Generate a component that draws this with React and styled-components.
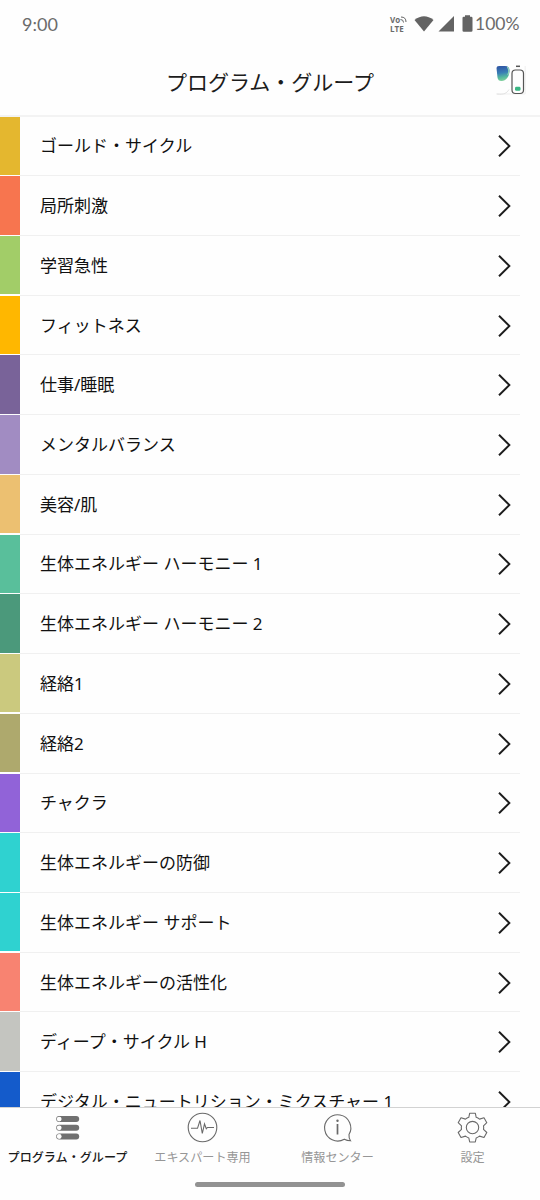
import React, { useState } from "react";
import styled, { createGlobalStyle } from "styled-components";

const GlobalStyle = createGlobalStyle`
  * {
    box-sizing: border-box;
  }

  body {
    margin: 0;
    background-color: #fefefe;
    font-family: "Noto Sans", "Noto Sans CJK JP", sans-serif;
  }
`;

const Screen = styled.div`
  display: flex;
  flex-direction: column;
  width: 540px;
  height: 1200px;
  overflow: hidden;
  background-color: #fefefe;
`;

const StatusBar = styled.div`
  display: flex;
  align-items: center;
  justify-content: space-between;
  flex-shrink: 0;
  height: 48px;
  padding: 0 22px 0 22px;
  color: #6b6b6b;
  font-family: Lato, sans-serif;
  font-size: 18px;
  line-height: 20px;
`;

const Clock = styled.span`
  padding-bottom: 1px;
`;

const StatusIcons = styled.div`
  display: flex;
  align-items: center;

  svg {
    display: block;
  }
`;

const VolteIcon = styled.div`
  display: flex;
  flex-direction: column;
  width: 18px;
  margin-right: 6px;
  font-family: "Open Sans", sans-serif;
  font-size: 8px;
  font-weight: 700;
  line-height: 9px;
`;

const VolteTop = styled.div`
  display: flex;
  align-items: center;
  height: 9px;
`;

const Battery = styled.span`
  width: 43px;
  margin-left: 2px;
  font-size: 17.5px;
  white-space: nowrap;
`;

const Header = styled.header`
  display: grid;
  grid-template-columns: 64px 1fr 64px;
  align-items: center;
  flex-shrink: 0;
  height: 68.6px;
  border-bottom: 2px solid #f3f3f3;
`;

const Title = styled.h1`
  grid-column: 2;
  margin: 0;
  padding-top: 2px;
  color: #1c1c1c;
  font-size: 21px;
  font-weight: 400;
  line-height: 30px;
  text-align: center;
`;

const DeviceStatus = styled.div`
  display: flex;
  justify-content: flex-end;
  padding: 0 14px 2px 0;
`;

const List = styled.ul`
  flex: 1;
  min-height: 0;
  margin: 0;
  padding: 0;
  overflow: hidden;
  list-style: none;
`;

const Row = styled.li`
  display: flex;
  height: 59.73px;
  cursor: pointer;
`;

const Swatch = styled.div`
  width: 20px;
  height: 58.4px;
  background-color: ${({ $color }) => $color};
`;

const RowBody = styled.div`
  display: flex;
  align-items: center;
  justify-content: space-between;
  width: 500px;
  padding: 1px 8px 0 20px;
  border-bottom: 1px solid #f0f0f0;
`;

const RowLabel = styled.span`
  color: #111;
  font-size: 17px;
  line-height: 26px;
  white-space: nowrap;
`;

const TabBar = styled.nav`
  display: grid;
  grid-template-columns: repeat(4, 1fr);
  flex-shrink: 0;
  height: 73px;
  border-top: 1px solid #d2d2d2;
`;

const Tab = styled.button`
  display: flex;
  flex-direction: column;
  align-items: center;
  padding: 4px 0 0;
  border: none;
  background: none;
  color: ${({ $active }) => ($active ? "#1a1a1a" : "#969696")};
  font-family: inherit;
  font-size: 12.1px;
  font-weight: ${({ $active }) => ($active ? 500 : 400)};
  line-height: 18px;
  white-space: nowrap;
  cursor: pointer;

  svg {
    flex-shrink: 0;
    margin-bottom: 5px;
  }
`;

const GestureArea = styled.div`
  display: flex;
  justify-content: center;
  flex-shrink: 0;
  height: 20px;
  padding-top: 2px;
`;

const GestureHandle = styled.div`
  width: 150px;
  height: 5px;
  border-radius: 3px;
  background-color: #929292;
`;

const groups = [
  { name: "ゴールド・サイクル", color: "#e4b72f" },
  { name: "局所刺激", color: "#f7754f" },
  { name: "学習急性", color: "#a2cd68" },
  { name: "フィットネス", color: "#ffb700" },
  { name: "仕事/睡眠", color: "#796399" },
  { name: "メンタルバランス", color: "#a18cc2" },
  { name: "美容/肌", color: "#ecc071" },
  { name: "生体エネルギー ハーモニー 1", color: "#59bf9b" },
  { name: "生体エネルギー ハーモニー 2", color: "#4b997b" },
  { name: "経絡1", color: "#cbc97e" },
  { name: "経絡2", color: "#aea96d" },
  { name: "チャクラ", color: "#9163d8" },
  { name: "生体エネルギーの防御", color: "#2fd2d0" },
  { name: "生体エネルギー サポート", color: "#2fd2d0" },
  { name: "生体エネルギーの活性化", color: "#f88371" },
  { name: "ディープ・サイクル H", color: "#c4c5c0" },
  { name: "デジタル・ニュートリション・ミクスチャー 1", color: "#145bcb" },
];

const ChevronIcon = () => (
  <svg width="16" height="26" viewBox="0 0 16 26" fill="none">
    <path d="M3 2.800L13.400 13L3 23.200" stroke="#1c1c1c" strokeWidth="1.9" />
  </svg>
);

const WifiIcon = () => (
  <svg width="20" height="18" viewBox="0 0 20 18">
    <path d="M.5 5Q10-2.5 19.5 5L10 16.5Z" fill="#636363" />
  </svg>
);

const SignalIcon = () => (
  <svg width="17" height="18" viewBox="0 0 17 18" style={{ marginLeft: 4 }}>
    <path d="M16 1V16.5H0.5Z" fill="#636363" />
  </svg>
);

const BatteryIcon = () => (
  <svg width="11" height="18" viewBox="0 0 11 18" style={{ marginLeft: 7 }}>
    <path
      d="M3 .2h5v1.5h1.2q1.3 0 1.3 1.3v12.400q0 1.3-1.3 1.3H1.8Q.5 16.700 .5 15.400V3Q.5 1.700 1.800 1.700H3Z"
      fill="#636363"
    />
  </svg>
);

const DeviceIcon = () => (
  <svg width="31" height="32" viewBox="0 0 31 32" fill="none">
    <defs>
      <linearGradient id="patch" x1="0" y1="0" x2="0.15" y2="1">
        <stop offset="0.1" stopColor="#315aa6" />
        <stop offset="0.5" stopColor="#397fb5" />
        <stop offset="0.8" stopColor="#55b99e" />
        <stop offset="1" stopColor="#79cd9b" />
      </linearGradient>
    </defs>
    <path d="M30.200 2V30H1" stroke="#efefef" strokeWidth="1" />
    <path d="M2 30C9 31 12 29 14 25.500" stroke="#e2e2e2" />
    <path
      d="M1.500 4Q1.500 2 4 2H10Q14.500 2 14.500 6.500C14.500 12.500 11 17 6.500 17Q3 17 2.500 13.500Z"
      fill="url(#patch)"
    />
    <path d="M12.300 2.800Q15 6 12.800 11" stroke="#91d6b8" strokeWidth="1.200" />
    <rect x="17" y="6" width="11.500" height="23.500" rx="3.500" stroke="#555" strokeWidth="1.200" />
    <path d="M21 2.300H25" stroke="#555" strokeWidth="1.500" />
    <rect x="20" y="22.800" width="5.500" height="4" rx="1.400" fill="#3ab684" />
  </svg>
);

const GroupsIcon = () => (
  <svg width="32" height="32" viewBox="0 0 32 32">
    {[5.4, 14.1, 22.8].map((y) => (
      <g key={y}>
        <rect x="4.200" y={y - 1.300} width="23" height="6" rx="3" fill="#707070" />
        <circle cx="7.200" cy={y + 1.700} r="2.400" fill="#fefefe" />
      </g>
    ))}
  </svg>
);

const ExpertIcon = () => (
  <svg width="32" height="32" viewBox="0 0 32 32" fill="none" stroke="#696969" strokeWidth="1.100">
    <circle cx="15.500" cy="15.500" r="14.300" />
    <path d="M4 16.300H10.500L13 8.500L15.300 21.500L17.500 12L19.300 16.800L20.500 15.500H27" />
  </svg>
);

const InfoIcon = () => (
  <svg width="32" height="32" viewBox="0 0 32 32" fill="none" stroke="#696969" strokeWidth="1.100">
    <path d="M28.500 28.800C26 28.700 24.200 28.200 22.300 27.200A13.100 13.100 0 1 1 27 22.500C26.800 25 27.300 27 28.500 28.800Z" />
    <path d="M15.500 12V22.500" strokeWidth="1.700" />
    <circle cx="15.500" cy="8.700" r="1.200" fill="#696969" stroke="none" />
  </svg>
);

const SettingsIcon = () => (
  <svg
    width="32"
    height="32"
    viewBox="0 0 32 32"
    fill="none"
    stroke="#696969"
    strokeWidth="1.100"
    strokeLinejoin="round"
  >
    <path d="M12.700 1.200H18.300L19.200 5.300Q21 5.900 22.500 7.100L27 5.700L29.800 10.700L26.500 13.800Q26.900 15.600 26.500 17.400L29.800 20.500L27 25.500L22.500 24.100Q21 25.300 19.200 25.900L18.300 30H12.700L11.800 25.900Q10 25.300 8.500 24.100L4 25.500L1.200 20.500L4.500 17.400Q4.100 15.600 4.500 13.800L1.200 10.700L4 5.700L8.500 7.100Q10 5.900 11.800 5.300Z" />
    <circle cx="15.500" cy="15.600" r="6.200" />
  </svg>
);

const tabs = [
  { id: "groups", label: "プログラム・グループ", Icon: GroupsIcon },
  { id: "expert", label: "エキスパート専用", Icon: ExpertIcon },
  { id: "info", label: "情報センター", Icon: InfoIcon },
  { id: "settings", label: "設定", Icon: SettingsIcon },
];

export default function App() {
  const [activeTab, setActiveTab] = useState("groups");

  return (
    <>
      <GlobalStyle />
      <Screen>
        <StatusBar>
          <Clock>9:00</Clock>
          <StatusIcons>
            <VolteIcon>
              <VolteTop>
                Vo
                <svg width="7" height="7" viewBox="0 0 7 7" fill="none" stroke="#636363">
                  <path d="M1 1Q6 1 6 6M.5 3.500Q3.500 3.500 3.500 6.500" />
                </svg>
              </VolteTop>
              <span>LTE</span>
            </VolteIcon>
            <WifiIcon />
            <SignalIcon />
            <BatteryIcon />
            <Battery>100%</Battery>
          </StatusIcons>
        </StatusBar>
        <Header>
          <Title>プログラム・グループ</Title>
          <DeviceStatus>
            <DeviceIcon />
          </DeviceStatus>
        </Header>
        <List>
          {groups.map(({ name, color }) => (
            <Row key={name}>
              <Swatch $color={color} />
              <RowBody>
                <RowLabel>{name}</RowLabel>
                <ChevronIcon />
              </RowBody>
            </Row>
          ))}
        </List>
        <TabBar>
          {tabs.map(({ id, label, Icon }) => (
            <Tab key={id} $active={id === activeTab} onClick={() => setActiveTab(id)}>
              <Icon />
              {label}
            </Tab>
          ))}
        </TabBar>
        <GestureArea>
          <GestureHandle />
        </GestureArea>
      </Screen>
    </>
  );
}
